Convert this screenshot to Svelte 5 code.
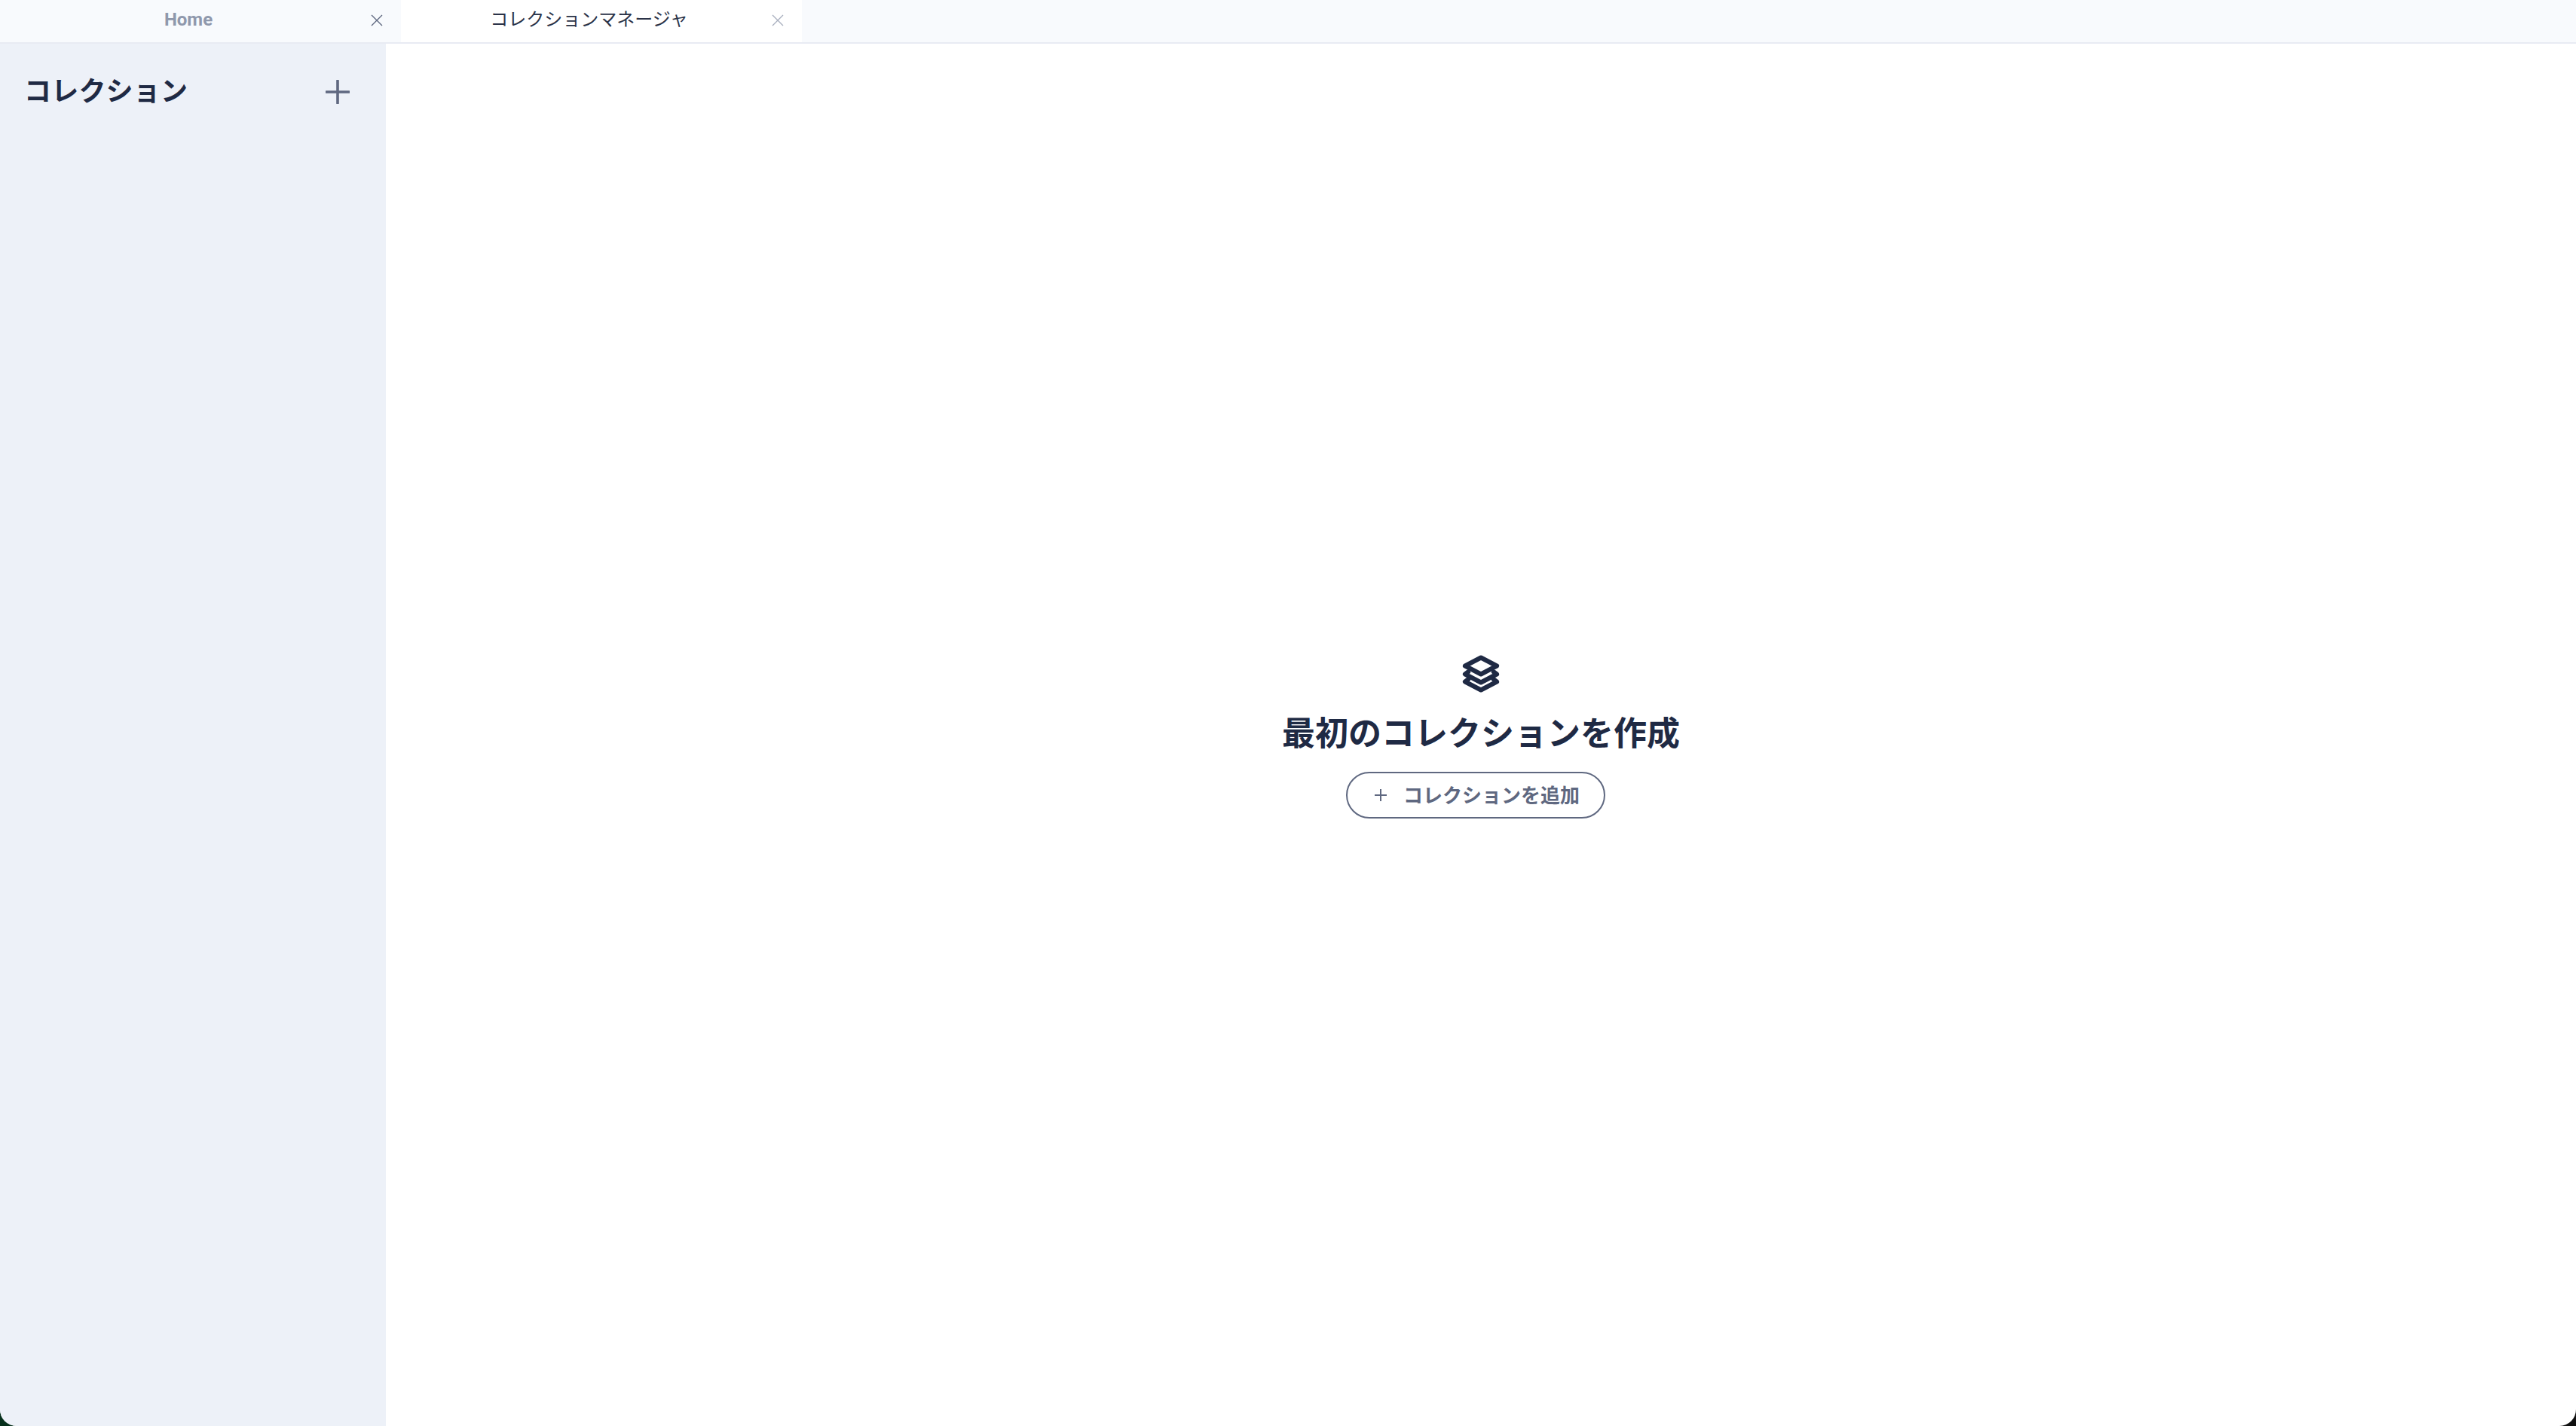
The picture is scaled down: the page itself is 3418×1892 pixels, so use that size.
<script>
  const tabs = [
    { label: 'Home', active: false },
    { label: 'コレクションマネージャ', active: true }
  ];
</script>

<div class="shell">
  <div class="tabbar">
    {#each tabs as tab}
      <div class="tab" class:active={tab.active}>
        <span class="tab-label">{tab.label}</span>
        <svg class="tab-close" viewBox="0 0 20 20" width="20" height="20" fill="none" stroke="currentColor" stroke-width="1.4">
          <path d="M3 3l14 14M17 3L3 17" />
        </svg>
      </div>
    {/each}
  </div>

  <div class="body">
    <aside class="sidebar">
      <h2 class="sidebar-title">コレクション</h2>
      <button class="icon-btn" aria-label="add">
        <svg viewBox="0 0 32 32" width="32" height="32" fill="none" stroke="currentColor" stroke-width="3.6" stroke-linecap="round">
          <path d="M16 1v30M1 16h30" />
        </svg>
      </button>
    </aside>

    <main class="main">
      <svg class="stack" viewBox="0 0 52 52" width="52" height="52" fill="none" stroke="currentColor" stroke-width="6.2" stroke-linejoin="round" stroke-linecap="round">
        <path d="M26 4.5L47 15.5 26 26.5 5 15.5z" />
        <path d="M9 23.5L5 26.5l21 11 21-11-4-3" />
        <path d="M9 33.5L5 36.5l21 11 21-11-4-3" />
      </svg>
      <h1 class="headline">最初のコレクションを作成</h1>
      <button class="add-btn">
        <svg viewBox="0 0 20 20" width="20" height="20" fill="none" stroke="currentColor" stroke-width="2">
          <path d="M10 2v16M2 10h16" />
        </svg>
        <span class="add-label">コレクションを追加</span>
      </button>
    </main>
  </div>
</div>

<style>
  :global(body) {
    margin: 0;
    background: linear-gradient(90deg, #06301c 0%, #101010 100%);
  }

  .shell {
    display: flex;
    flex-direction: column;
    height: 100vh;
    overflow: hidden;
    border-radius: 0 0 22px 22px;
    background: #fff;
    font-family: Roboto, 'Noto Sans CJK JP', sans-serif;
  }

  .tabbar {
    display: flex;
    flex: none;
    height: 56px;
    background: #f8fafd;
    border-bottom: 2px solid #e8ebf3;
  }

  .tab {
    position: relative;
    display: flex;
    align-items: center;
    justify-content: center;
    box-sizing: border-box;
    width: 532px;
    padding: 0 32px 4px 0;
    color: #8f98ac;
    font-size: 24px;
    font-weight: 700;
  }

  .tab.active {
    background: #fff;
    color: #2b3348;
    font-weight: 400;
    padding: 0 33px 9px 0;
  }

  .tab-label {
    white-space: nowrap;
  }

  .tab-close {
    position: absolute;
    right: 22px;
    top: 17px;
    color: #5f6880;
  }

  .tab.active .tab-close {
    color: #a9b0bf;
  }

  .body {
    display: flex;
    flex: 1;
    min-height: 0;
  }

  .sidebar {
    display: flex;
    align-items: flex-start;
    justify-content: space-between;
    box-sizing: border-box;
    flex: none;
    width: 512px;
    padding: 39px 32px 0;
    background: #edf1f8;
  }

  .sidebar-title {
    margin: 0;
    color: #1f2a44;
    font-size: 36px;
    font-weight: 700;
    line-height: 50px;
    letter-spacing: 0.2px;
  }

  .icon-btn {
    display: flex;
    margin: 9px 16px 0 0;
    padding: 0;
    border: 0;
    background: none;
    color: #5f6880;
  }

  .main {
    display: flex;
    flex: 1;
    flex-direction: column;
    align-items: center;
    justify-content: center;
    padding-top: 4px;
    color: #1f2a44;
  }

  .headline {
    margin: 24px 0 20px;
    font-size: 44px;
    font-weight: 700;
    line-height: 60px;
  }

  .add-btn {
    display: flex;
    align-items: center;
    gap: 20px;
    box-sizing: border-box;
    height: 62px;
    margin-right: 14px;
    padding: 0 32px 0 34px;
    border: 2px solid #5f6880;
    border-radius: 31px;
    background: #fff;
    color: #5f6880;
    font-family: inherit;
    font-size: 26px;
    font-weight: 600;
  }

  .add-label {
    padding-bottom: 3px;
  }
</style>
